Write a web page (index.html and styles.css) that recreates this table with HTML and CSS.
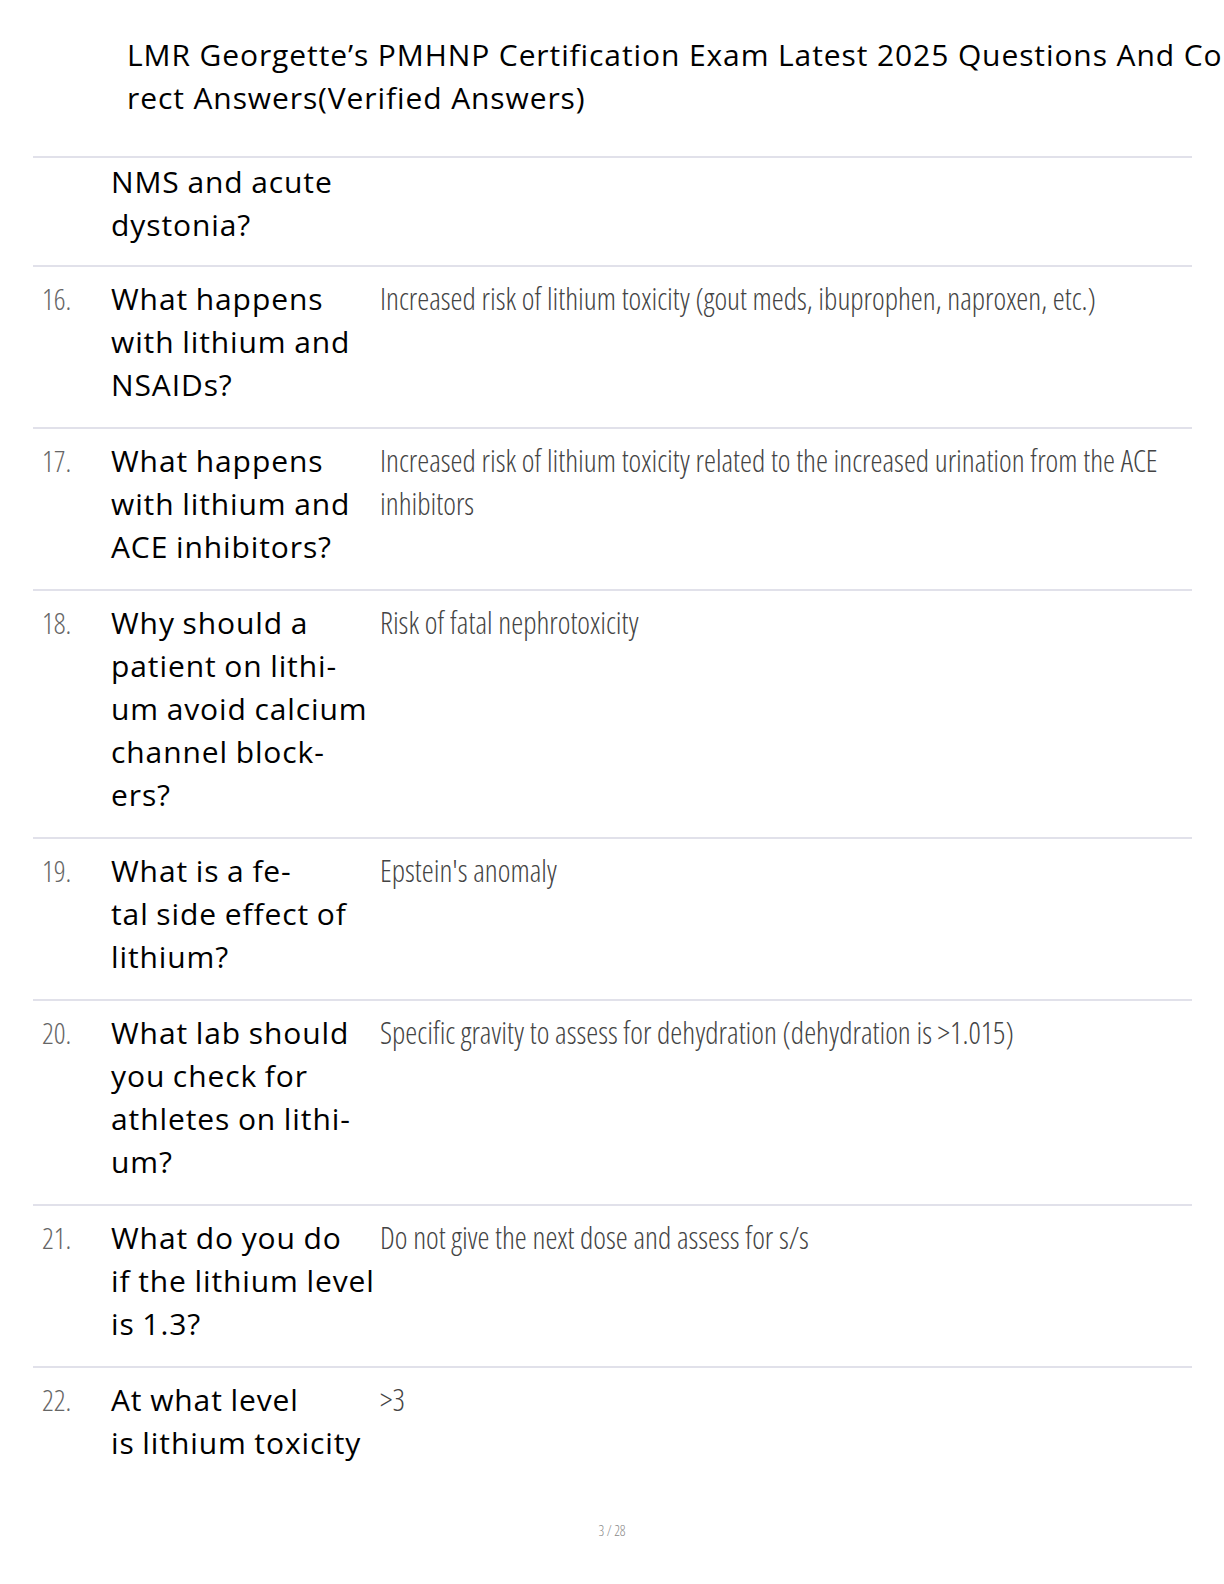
FILE: index.html
```html
<!DOCTYPE html>
<html lang="en">
<head>
<meta charset="utf-8">
<title>LMR Georgette’s PMHNP Certification Exam</title>
<link rel="stylesheet" href="styles.css">
</head>
<body>
<header class="doc-title">
  <span class="title-line">LMR Georgette’s PMHNP Certification Exam Latest 2025 Questions And Co</span>
  <span class="title-line">rect Answers(Verified Answers)</span>
</header>
<main class="qa">
  <div class="row cont">
    <div class="num"></div>
    <div class="q">NMS and acute<br>dystonia?</div>
    <div class="a"></div>
  </div>
  <div class="row">
    <div class="num">16.</div>
    <div class="q">What happens<br>with lithium and<br>NSAIDs?</div>
    <div class="a">Increased risk of lithium toxicity (gout meds, ibuprophen, naproxen, etc.)</div>
  </div>
  <div class="row">
    <div class="num">17.</div>
    <div class="q">What happens<br>with lithium and<br>ACE inhibitors?</div>
    <div class="a">Increased risk of lithium toxicity related to the increased urination from the ACE<br>inhibitors</div>
  </div>
  <div class="row">
    <div class="num">18.</div>
    <div class="q">Why should a<br>patient on lithi-<br>um avoid calcium<br>channel block-<br>ers?</div>
    <div class="a">Risk of fatal nephrotoxicity</div>
  </div>
  <div class="row">
    <div class="num">19.</div>
    <div class="q">What is a fe-<br>tal side effect of<br>lithium?</div>
    <div class="a">Epstein's anomaly</div>
  </div>
  <div class="row">
    <div class="num">20.</div>
    <div class="q">What lab should<br>you check for<br>athletes on lithi-<br>um?</div>
    <div class="a">Specific gravity to assess for dehydration (dehydration is &gt;1.015)</div>
  </div>
  <div class="row">
    <div class="num">21.</div>
    <div class="q">What do you do<br>if the lithium level<br>is 1.3?</div>
    <div class="a">Do not give the next dose and assess for s/s</div>
  </div>
  <div class="row last">
    <div class="num">22.</div>
    <div class="q">At what level<br>is lithium toxicity</div>
    <div class="a">&gt;3</div>
  </div>
</main>
<footer class="page-num">3 / 28</footer>
</body>
</html>
```
FILE: styles.css
```css
html, body {
  margin: 0;
  padding: 0;
  background: #fff;
}
body {
  width: 1224px;
  height: 1584px;
  overflow: hidden;
  font-family: "Open Sans", "Noto Sans", sans-serif;
  color: #000;
}
.doc-title {
  padding: 33px 0 0 127px;
  font-size: 30px;
  line-height: 43px;
  letter-spacing: 0.9px;
  white-space: nowrap;
}
.title-line {
  display: block;
}
.qa {
  margin: 37px 0 0 33px;
  width: 1159px;
}
.row {
  display: grid;
  grid-template-columns: 78px 269px 1fr;
  border-top: 2px solid #e1e1ea;
  padding: 10px 0 21px;
}
.row.cont {
  padding: 2px 0 19px;
}
.row.last {
  padding-bottom: 0;
}
.num {
  padding-left: 9px;
  font-size: 29px;
  line-height: 43px;
  font-weight: 300;
  font-stretch: 75%;
  color: #666;
}
.q {
  font-size: 30px;
  line-height: 43px;
  letter-spacing: 0.9px;
  word-spacing: -1px;
  white-space: nowrap;
}
.a {
  font-size: 30.3px;
  line-height: 43px;
  font-weight: 300;
  font-stretch: 75%;
  color: #444;
  white-space: nowrap;
}
.page-num {
  margin-top: 57px;
  text-align: center;
  font-size: 14px;
  line-height: 19px;
  font-weight: 300;
  font-stretch: 75%;
  color: #888;
}
```
